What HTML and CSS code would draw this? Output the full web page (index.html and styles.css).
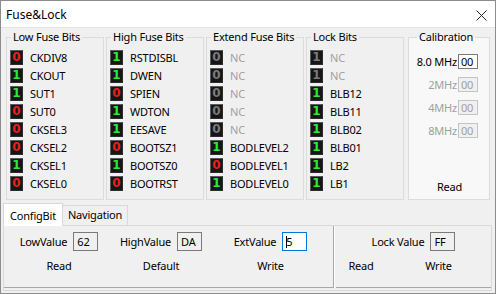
FILE: index.html
```html
<!DOCTYPE html>
<html lang="en">
<head>
    <meta charset="UTF-8">
    <title>Fuse&amp;Lock</title>
    <link rel="stylesheet" href="styles.css">
</head>
<body>
<div class="window">

    <!-- Title bar -->
    <div class="titlebar">
        <span class="title">Fuse&amp;Lock</span>
        <svg class="close" width="11" height="11" viewBox="0 0 11 11">
            <path d="M0.5 0.5 L10.5 10.5 M10.5 0.5 L0.5 10.5" stroke="#222" stroke-width="1" fill="none"/>
        </svg>
    </div>

    <!-- Fuse groups -->
    <div class="groups">
        <fieldset class="group">
            <legend>Low Fuse Bits</legend>
            <ul class="bits">
                <li><span class="bit zero">0</span>CKDIV8</li>
                <li><span class="bit one">1</span>CKOUT</li>
                <li><span class="bit one">1</span>SUT1</li>
                <li><span class="bit zero">0</span>SUT0</li>
                <li><span class="bit zero">0</span>CKSEL3</li>
                <li><span class="bit zero">0</span>CKSEL2</li>
                <li><span class="bit one">1</span>CKSEL1</li>
                <li><span class="bit zero">0</span>CKSEL0</li>
            </ul>
        </fieldset>
        <fieldset class="group">
            <legend>High Fuse Bits</legend>
            <ul class="bits">
                <li><span class="bit one">1</span>RSTDISBL</li>
                <li><span class="bit one">1</span>DWEN</li>
                <li><span class="bit zero">0</span>SPIEN</li>
                <li><span class="bit one">1</span>WDTON</li>
                <li><span class="bit one">1</span>EESAVE</li>
                <li><span class="bit zero">0</span>BOOTSZ1</li>
                <li><span class="bit one">1</span>BOOTSZ0</li>
                <li><span class="bit zero">0</span>BOOTRST</li>
            </ul>
        </fieldset>
        <fieldset class="group">
            <legend>Extend Fuse Bits</legend>
            <ul class="bits">
                <li class="off"><span class="bit">0</span>NC</li>
                <li class="off"><span class="bit">0</span>NC</li>
                <li class="off"><span class="bit">0</span>NC</li>
                <li class="off"><span class="bit">0</span>NC</li>
                <li class="off"><span class="bit">0</span>NC</li>
                <li><span class="bit one">1</span>BODLEVEL2</li>
                <li><span class="bit zero">0</span>BODLEVEL1</li>
                <li><span class="bit one">1</span>BODLEVEL0</li>
            </ul>
        </fieldset>
        <fieldset class="group">
            <legend>Lock Bits</legend>
            <ul class="bits">
                <li class="off"><span class="bit">1</span>NC</li>
                <li class="off"><span class="bit">1</span>NC</li>
                <li><span class="bit one">1</span>BLB12</li>
                <li><span class="bit one">1</span>BLB11</li>
                <li><span class="bit one">1</span>BLB02</li>
                <li><span class="bit one">1</span>BLB01</li>
                <li><span class="bit one">1</span>LB2</li>
                <li><span class="bit one">1</span>LB1</li>
            </ul>
        </fieldset>
        <fieldset class="group calib">
            <legend>Calibration</legend>
            <div class="calib-rows">
                <span class="calib-label">8.0 MHz</span><span class="edit small">00</span>
                <span class="calib-label off">2MHz</span><span class="edit small off">00</span>
                <span class="calib-label off">4MHz</span><span class="edit small off">00</span>
                <span class="calib-label off">8MHz</span><span class="edit small off">00</span>
            </div>
            <div class="button calib-read">Read</div>
        </fieldset>
    </div>

    <!-- Tabs -->
    <div class="tabs">
        <div class="tab active">ConfigBit</div>
        <div class="tab">Navigation</div>
    </div>
    <div class="tabpanel">
        <div class="sect fuse-sect">
            <div class="field"><span>LowValue</span><span class="edit">62</span></div>
            <div class="field"><span>HighValue</span><span class="edit">DA</span></div>
            <div class="field"><span>ExtValue</span><span class="edit focus"><i class="caret"></i>5</span></div>
            <div class="button">Read</div>
            <div class="button">Default</div>
            <div class="button">Write</div>
        </div>
        <div class="sect lock-sect">
            <div class="field lock-field"><span>Lock Value</span><span class="edit">FF</span></div>
            <div class="button">Read</div>
            <div class="button">Write</div>
        </div>
    </div>

</div>
</body>
</html>
```

FILE: styles.css
```css
/* General Styling */
body {
    margin: 0;
    font-family: "Noto Sans", "Open Sans", sans-serif;
    font-size: 11px;
    letter-spacing: -0.2px;
    color: #000;
    background: #ffffff;
}

.window {
    width: 494px;
    height: 292px;
    border: 1px solid #8c8c8c;
    background: #f0f0f0;
}

/* Title bar */
.titlebar {
    height: 26px;
    background: #ffffff;
    border-bottom: 1px solid #e4e4e4;
    display: flex;
    align-items: center;
    justify-content: space-between;
    padding: 0 8px 0 5px;
}

.title {
    font-size: 12px;
    letter-spacing: 0;
}

.close {
    margin-top: 2px;
}

/* Groups */
.groups {
    display: flex;
    gap: 2px;
    padding: 2px 0 0 5px;
}

.group {
    box-sizing: border-box;
    width: 98px;
    height: 170px;
    margin: 0;
    padding: 4px 0 0 3px;
    border: 1px solid #dcdcdc;
    min-width: 0;
}

.group legend {
    padding: 0 2px;
    margin-left: 1px;
    line-height: 14px;
}

.bits {
    list-style: none;
    margin: 0;
    padding: 0;
}

.bits li {
    height: 18px;
    display: flex;
    align-items: center;
}

.bits li.off {
    color: #a0a0a0;
}

.bit {
    box-sizing: border-box;
    width: 13px;
    height: 15px;
    margin-right: 7px;
    display: inline-flex;
    align-items: center;
    justify-content: center;
    background: #161616;
    border: 1px solid;
    border-color: #5c5c5c #2c2c2c #2c2c2c #5c5c5c;
    font-family: "DejaVu Sans", sans-serif;
    font-weight: bold;
    font-size: 12px;
    letter-spacing: 0;
    color: #7a7a7a;
}

.bit.zero {
    color: #e8201c;
}

.bit.one {
    color: #2ee83a;
}

/* Calibration */
.calib {
    width: 82px;
    margin-left: 2px;
    background: #f8f8f8;
    padding: 10px 0 0 7px;
    display: flex;
    flex-direction: column;
}

.calib-rows {
    display: grid;
    grid-template-columns: 41px 20px;
    column-gap: 1px;
    row-gap: 8px;
    align-items: center;
    white-space: nowrap;
}

.calib-label {
    text-align: right;
}

.off {
    color: #a0a0a0;
}

.calib-read {
    margin-top: auto;
    margin-bottom: 3px;
    padding-right: 6px;
}

/* Edits and buttons */
.edit {
    box-sizing: border-box;
    display: inline-block;
    width: 25px;
    height: 19px;
    line-height: 17px;
    padding-left: 3px;
    border: 1px solid #7a7a7a;
    background: #f0f0f0;
}

.edit.small {
    width: 20px;
    height: 15px;
    line-height: 13px;
    padding-left: 2px;
    background: #ffffff;
}

.edit.small.off {
    border-color: #c4c4c4;
    background: #f0f0f0;
}

.edit.focus {
    border-color: #0078d7;
    background: #ffffff;
}

.caret {
    display: inline-block;
    width: 1px;
    height: 12px;
    background: #000;
    vertical-align: -2px;
    margin-right: -1px;
}

.button {
    text-align: center;
    line-height: 18px;
}

/* Tabs */
.tabs {
    display: flex;
    align-items: flex-end;
    height: 22px;
    margin: 3px 0 0 2px;
}

.tab {
    height: 19px;
    line-height: 18px;
    padding: 0 5px;
    border: 1px solid #d9d9d9;
    border-bottom: none;
    margin-left: -1px;
}

.tab.active {
    height: 22px;
    line-height: 24px;
    padding: 0 6px;
    margin-left: 0;
    margin-bottom: -1px;
    background: #ffffff;
    position: relative;
}

.tabpanel {
    height: 64px;
    margin: 0 3px 0 2px;
    border: 1px solid #d9d9d9;
    display: flex;
}

.sect {
    height: 55px;
    border-bottom: 1px solid #a8a8a8;
    display: grid;
    row-gap: 6px;
    align-content: start;
    padding-top: 6px;
}

.fuse-sect {
    width: 329px;
    border-right: 1px solid #a8a8a8;
    box-shadow: 1px 0 0 #ffffff;
    grid-template-columns: 110px 94px 1fr;
}

.lock-sect {
    flex: 1;
    margin-left: 2px;
    grid-template-columns: 50px 1fr;
}

.field {
    display: flex;
    align-items: center;
    gap: 6px;
    justify-self: center;
}

.lock-field {
    grid-column: 1 / 3;
}
```
